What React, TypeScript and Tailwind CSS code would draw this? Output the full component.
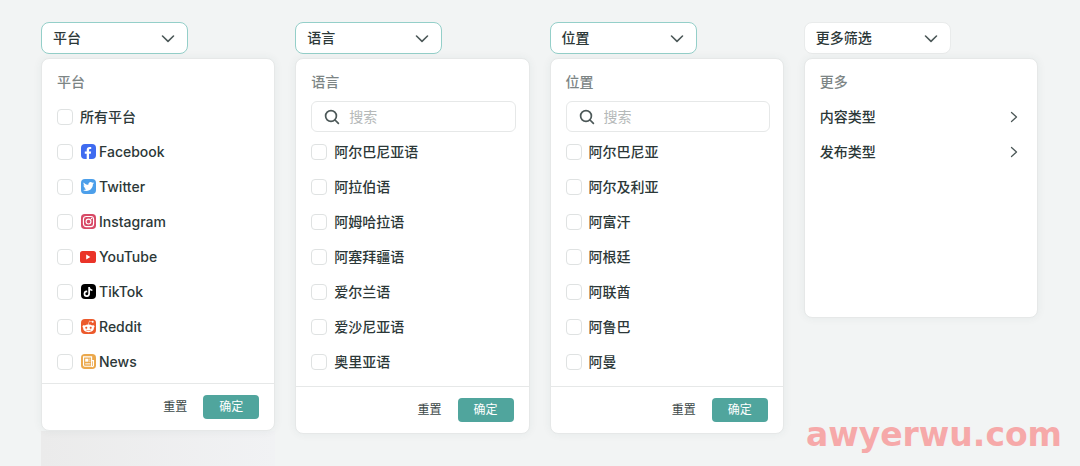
import type { ReactNode } from 'react';
import { FaFacebookF, FaRedditAlien, FaTiktok, FaTwitter } from 'react-icons/fa';

interface Option {
  label: string;
  icon?: ReactNode;
}

interface FilterProps {
  name: string;
  title: string;
  options: Option[];
  searchable?: boolean;
}

const badge = 'flex h-[15px] w-[15px] justify-center rounded-[4px] text-white';

const InstagramIcon = () => (
  <svg viewBox="0 0 16 16" className="h-[15px] w-[15px]" fill="none">
    <rect width="16" height="16" rx="4" fill="#d84a66" />
    <rect x="2.6" y="2.6" width="10.8" height="10.8" rx="3" stroke="#fff" strokeWidth="1.2" />
    <circle cx="8" cy="8" r="2.6" stroke="#fff" strokeWidth="1.2" />
    <circle cx="11.2" cy="4.9" r="0.8" fill="#fff" />
  </svg>
);

const YoutubeIcon = () => (
  <svg viewBox="0 0 16 12" className="h-3 w-4">
    <rect width="16" height="12" rx="2.6" fill="#ea3428" />
    <path d="M6.2 3.6v4.8L10.4 6z" fill="#fff" />
  </svg>
);

const NewsIcon = () => (
  <svg viewBox="0 0 16 16" className="h-[15px] w-[15px]" fill="none">
    <rect width="16" height="16" rx="4" fill="#eba84c" />
    <path
      d="M2.7 3h8.6v10H3.9a1.2 1.2 0 0 1-1.2-1.2zM11.3 7h2v4.800a1.200 1.200 0 0 1-2 1.200"
      stroke="#fff"
      strokeWidth="1.2"
    />
    <rect x="4.5" y="5" width="3.4" height="3.2" fill="#fff" />
    <path d="M8.800 5.500h1.200M8.800 7.600h1.200M4.500 10.500h5.500" stroke="#fff" />
  </svg>
);

const platforms: Option[] = [
  { label: '所有平台' },
  {
    label: 'Facebook',
    icon: (
      <span className={`${badge} items-end bg-[#3f6bf0]`}>
        <FaFacebookF size={12} />
      </span>
    ),
  },
  {
    label: 'Twitter',
    icon: (
      <span className={`${badge} items-center bg-[#4c9fea]`}>
        <FaTwitter size={11} />
      </span>
    ),
  },
  { label: 'Instagram', icon: <InstagramIcon /> },
  { label: 'YouTube', icon: <YoutubeIcon /> },
  {
    label: 'TikTok',
    icon: (
      <span className={`${badge} items-center bg-black`}>
        <FaTiktok size={10} />
      </span>
    ),
  },
  {
    label: 'Reddit',
    icon: (
      <span className={`${badge} items-center bg-[#ec5a2c]`}>
        <FaRedditAlien size={13} />
      </span>
    ),
  },
  { label: 'News', icon: <NewsIcon /> },
];

const languages: Option[] = [
  { label: '阿尔巴尼亚语' },
  { label: '阿拉伯语' },
  { label: '阿姆哈拉语' },
  { label: '阿塞拜疆语' },
  { label: '爱尔兰语' },
  { label: '爱沙尼亚语' },
  { label: '奥里亚语' },
];

const locations: Option[] = [
  { label: '阿尔巴尼亚' },
  { label: '阿尔及利亚' },
  { label: '阿富汗' },
  { label: '阿根廷' },
  { label: '阿联酋' },
  { label: '阿鲁巴' },
  { label: '阿曼' },
];

const moreFilters = ['内容类型', '发布类型'];

function Trigger({ label, active = false }: { label: string; active?: boolean }) {
  return (
    <button
      type="button"
      aria-expanded="true"
      className={`mb-1 flex h-8 w-[147px] items-center justify-between rounded-lg border bg-white px-[11px] ${
        active ? 'border-[#94cfc9]' : 'border-[#e9ebeb]'
      }`}
    >
      {label}
      <svg viewBox="0 0 16 16" className="h-4 w-4" fill="none" stroke="#4c5858" strokeWidth="1.6">
        <path d="M2.5 6 8 11.300 13.500 6" strokeLinecap="round" strokeLinejoin="round" />
      </svg>
    </button>
  );
}

function SearchBox({ label }: { label: string }) {
  return (
    <label className="mt-[9px] mb-[2px] flex h-[31px] items-center gap-[9px] rounded-md border border-[#e6e8e8] px-3">
      <svg viewBox="0 0 16 16" className="h-4 w-4 shrink-0" fill="none" stroke="#4c5858" strokeWidth="1.7">
        <circle cx="7" cy="7" r="5.4" />
        <path d="m11 11 3.400 3.400" strokeLinecap="round" />
      </svg>
      <input
        type="search"
        aria-label={`搜索${label}`}
        placeholder="搜索"
        className="w-full min-w-0 bg-transparent font-normal outline-none placeholder:text-[#b5b9b9]"
      />
    </label>
  );
}

function Filter({ name, title, options, searchable = false }: FilterProps) {
  return (
    <section className="relative">
      <Trigger label={title} active />
      <form className="rounded-lg border border-[#e6e8e8] bg-white shadow-[0_0_10px_rgba(40,60,60,0.06)]">
        <div className={`pt-[13px] pr-[13px] pl-[15px] ${searchable ? 'pb-[7px]' : 'pb-1'}`}>
          <h2 className="text-[#7d8585]">{title}</h2>
          {searchable ? <SearchBox label={title} /> : <div className="h-[7px]" />}
          <ul>
            {options.map((option) => (
              <li key={option.label}>
                <label className="flex h-[35px] items-center">
                  <input
                    type="checkbox"
                    name={name}
                    value={option.label}
                    className="mr-[7px] h-4 w-4 appearance-none rounded-[4px] border border-[#dfe2e2] bg-white checked:border-[#50a59d] checked:bg-[#50a59d]"
                  />
                  {option.icon && (
                    <span className="mr-[3px] flex w-4 items-center justify-center">{option.icon}</span>
                  )}
                  {option.label}
                </label>
              </li>
            ))}
          </ul>
        </div>
        <div className="flex h-[47px] items-center justify-end gap-4 border-t border-[#e6e8e8] px-[15px] text-xs font-normal">
          <button type="reset" className="text-[#3c4848]">
            重置
          </button>
          <button type="button" className="h-6 w-14 rounded-[4px] bg-[#50a59d] text-white">
            确定
          </button>
        </div>
      </form>
    </section>
  );
}

export default function App() {
  return (
    <main className="relative min-h-screen overflow-hidden bg-[#f2f4f4] pt-[22px] pr-[42px] pl-[41px] font-['Inter','Noto_Sans_CJK_SC',sans-serif] text-sm font-medium text-[#2c3838]">
      <div className="grid grid-cols-4 items-start gap-5">
        <div>
          <Filter name="platform" title="平台" options={platforms} />
          <div className="h-9 bg-linear-to-r from-[#ebebeb] to-[#f1f2f4]" />
        </div>
        <Filter name="language" title="语言" options={languages} searchable />
        <Filter name="location" title="位置" options={locations} searchable />
        <section>
          <Trigger label="更多筛选" />
          <div className="h-[260px] rounded-lg border border-[#e6e8e8] bg-white pt-[13px] pr-[15px] pl-[15px] shadow-[0_0_10px_rgba(40,60,60,0.06)]">
            <h2 className="mb-[7px] text-[#7d8585]">更多</h2>
            {moreFilters.map((item) => (
              <button key={item} type="button" className="flex h-[35px] w-full items-center justify-between">
                {item}
                <svg viewBox="0 0 16 16" className="h-4 w-4" fill="none" stroke="#4c5858" strokeWidth="1.3">
                  <path d="m5.500 3.500 5 4.500-5 4.500" strokeLinecap="round" strokeLinejoin="round" />
                </svg>
              </button>
            ))}
          </div>
        </section>
      </div>
      <p className="absolute right-[18px] bottom-3 font-['DejaVu_Sans',sans-serif] text-[33px] leading-10 font-bold text-[#f6a9a9]">
        awyerwu.com
      </p>
    </main>
  );
}
